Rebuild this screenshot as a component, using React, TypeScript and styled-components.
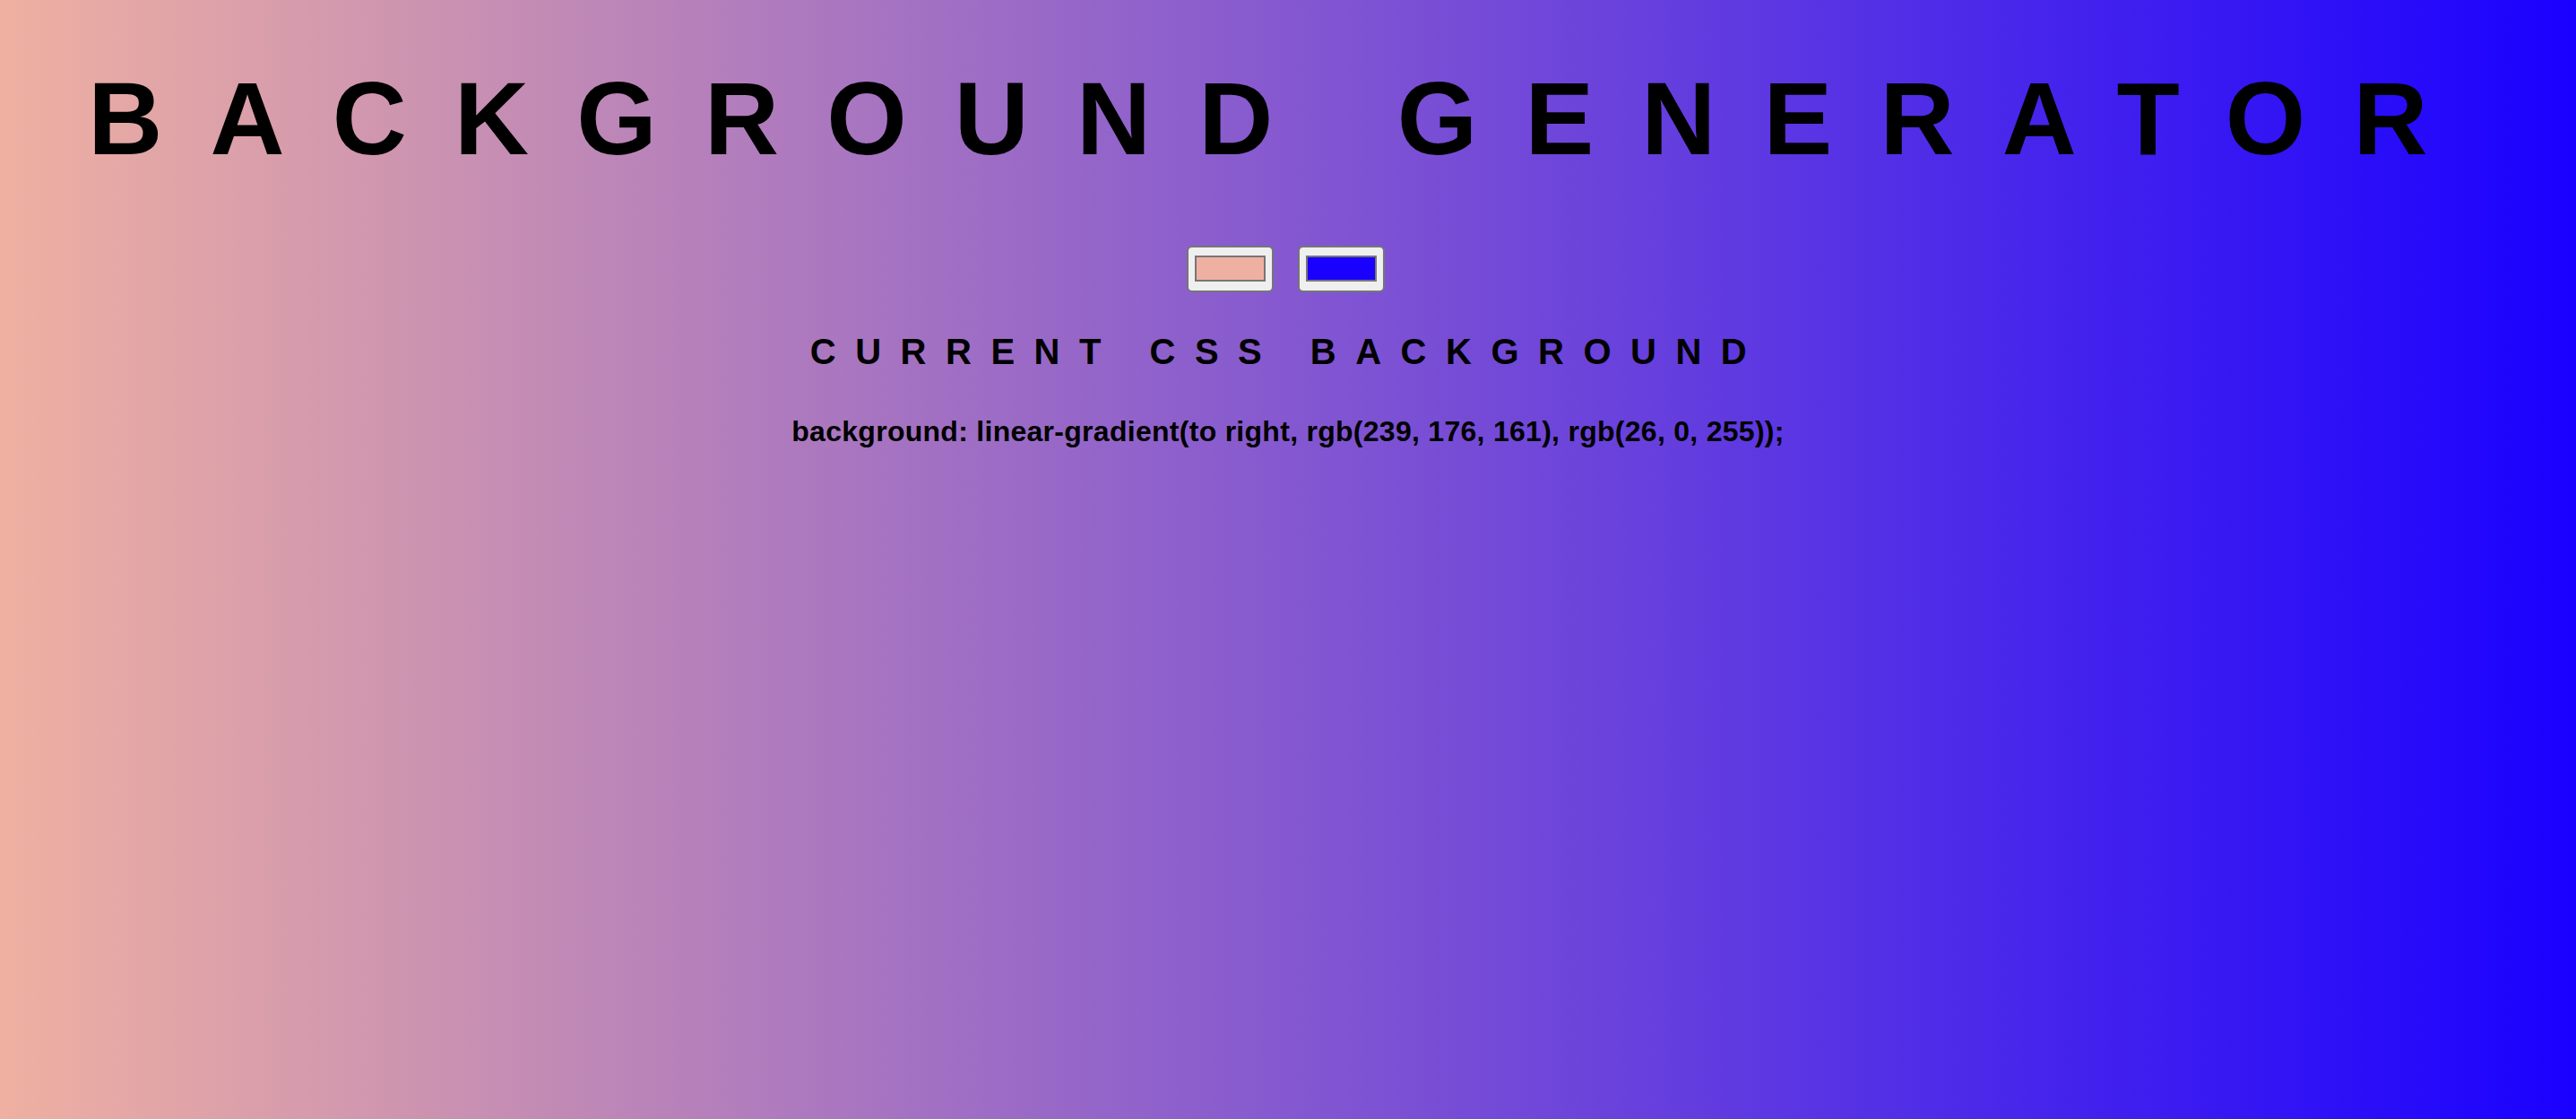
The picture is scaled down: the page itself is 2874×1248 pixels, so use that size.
import React, { useState } from "react";
import styled, { createGlobalStyle } from "styled-components";

const GlobalStyle = createGlobalStyle`
  html, body {
    margin: 0;
    padding: 0;
    height: 100%;
  }
  body {
    font-family: "Liberation Sans", Arial, Helvetica, sans-serif;
    color: #000;
  }
  #root {
    min-height: 100%;
  }
`;

const Page = styled.div<{ $from: string; $to: string }>`
  min-height: 100vh;
  box-sizing: border-box;
  padding-top: 75px;
  display: flex;
  flex-direction: column;
  align-items: center;
  text-align: center;
  background: linear-gradient(to right, ${(p) => p.$from}, ${(p) => p.$to});
`;

const Title = styled.h1`
  margin: 0 14px 0 0;
  font-size: 115px;
  line-height: 1;
  font-weight: 700;
  letter-spacing: 53.2px;
  white-space: nowrap;
`;

const Pickers = styled.div`
  display: flex;
  gap: 27px;
  margin-top: 84px;
  padding-right: 5px;
`;

const ColorInput = styled.input`
  -webkit-appearance: none;
  appearance: none;
  box-sizing: border-box;
  width: 97px;
  height: 52px;
  margin: 0;
  padding: 9px 7px 10px;
  border: 2px solid #767676;
  border-radius: 6px;
  background-color: #efefef;
  cursor: pointer;

  &::-webkit-color-swatch-wrapper {
    padding: 0;
  }
  &::-webkit-color-swatch {
    border: 2px solid #767676;
    border-radius: 0;
  }
`;

const Subtitle = styled.h3`
  margin: 45.5px 0 0;
  font-size: 40px;
  line-height: 1;
  font-weight: 700;
  letter-spacing: 21.5px;
  white-space: nowrap;
`;

const CssLine = styled.p`
  margin: 53px 0 0;
  font-size: 32px;
  line-height: 1;
  font-weight: 700;
  letter-spacing: 0.28px;
  white-space: nowrap;
`;

function hexToRgb(hex: string): string {
  const v = hex.replace("#", "");
  const r = parseInt(v.slice(0, 2), 16);
  const g = parseInt(v.slice(2, 4), 16);
  const b = parseInt(v.slice(4, 6), 16);
  return `rgb(${r}, ${g}, ${b})`;
}

export default function App() {
  const [color1, setColor1] = useState("#efb0a1");
  const [color2, setColor2] = useState("#1a00ff");
  const from = hexToRgb(color1);
  const to = hexToRgb(color2);

  return (
    <>
      <GlobalStyle />
      <Page $from={from} $to={to}>
        <Title>BACKGROUND GENERATOR</Title>
        <Pickers>
          <ColorInput
            type="color"
            value={color1}
            onChange={(e) => setColor1(e.target.value)}
          />
          <ColorInput
            type="color"
            value={color2}
            onChange={(e) => setColor2(e.target.value)}
          />
        </Pickers>
        <Subtitle>CURRENT CSS BACKGROUND</Subtitle>
        <CssLine>
          background: linear-gradient(to right, {from}, {to});
        </CssLine>
      </Page>
    </>
  );
}
